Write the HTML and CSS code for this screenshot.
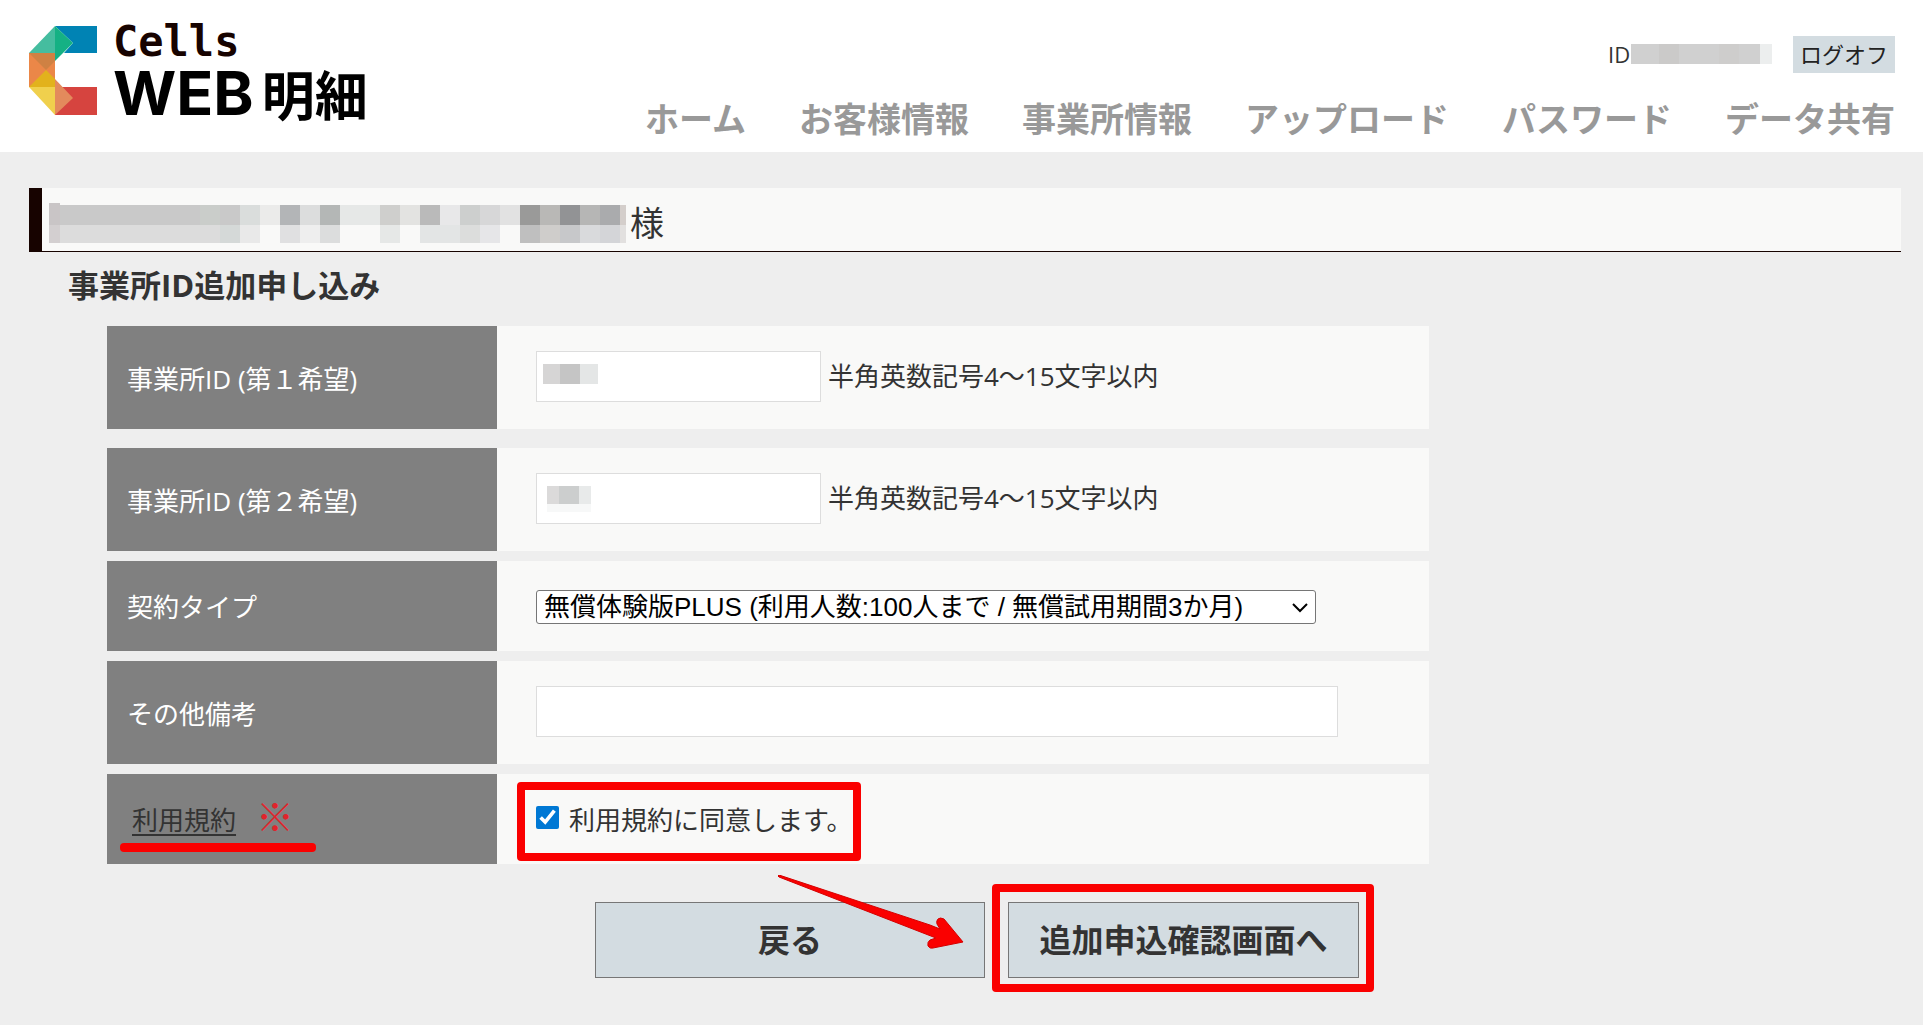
FILE: index.html
```html
<!DOCTYPE html>
<html lang="ja">
<head>
<meta charset="utf-8">
<title>Cells WEB明細</title>
<link rel="stylesheet" href="styles.css">
</head>
<body>
<header class="header">
  <a class="logo" href="#">
    <svg class="logo-mark" viewBox="0 0 68 90" width="68" height="90" aria-hidden="true">
      <path fill="#0083b4" d="M26 0H68V27H35L44 17z"/>
      <path fill="#45bd9f" d="M26 0L0 27H26z"/>
      <path fill="#15b184" d="M26 0L44 17L26 35z"/>
      <path fill="#eb8748" d="M0 27H26V61H0z"/>
      <path fill="#cf8143" d="M0 27H26V35L17 44z"/>
      <path fill="#d6443f" d="M26 61H68V89H26z"/>
      <path fill="#f0d04d" d="M0 61H26V89z"/>
      <path fill="#e2b21c" d="M0 61L17 44L26 53V61z"/>
      <path fill="#e38a5c" d="M26 53L44 72L26 89z"/>
    </svg>
    <span class="logo-text">
      <span class="logo-cells">Cells</span>
      <span class="logo-product"><span class="logo-web">WEB</span><span class="logo-meisai">明細</span></span>
    </span>
  </a>
  <div class="header-side">
    <div class="account">
      <span class="account-id">ID:<svg class="account-mask" width="141" height="20" aria-hidden="true"><path fill="#d0d0d0" d="M0 0h130v20H0z"/><path fill="#cbcac9" d="M28 0h20v20H28z"/><path fill="#cecdcc" d="M88 0h20v20H88z"/><path fill="#eceeee" d="M129 0h12v20h-12z"/></svg></span>
      <button class="logoff" type="button">ログオフ</button>
    </div>
    <nav class="nav">
      <a href="#">ホーム</a>
      <a href="#">お客様情報</a>
      <a href="#">事業所情報</a>
      <a href="#">アップロード</a>
      <a href="#">パスワード</a>
      <a href="#">データ共有</a>
    </nav>
  </div>
</header>
<main class="main">
  <h1 class="customer">
    <svg class="customer-mask" width="577" height="40" aria-hidden="true">
      <path fill="#c9c9c9" d="M0 2h191v26H0z"/>
      <path fill="#dcdcdc" d="M0 22h191v18H0z"/>
      <path fill="#c9c5c6" d="M0 0h11v22H0z"/>
      <path fill="#d3cfd0" d="M0 22h11v18H0z"/>
      <path fill="#cacdca" d="M151 2h20v20h-20z"/><path fill="#d5d9d8" d="M171 22h20v18h-20z"/>
      <path fill="#dadddc" d="M191 2h20v20h-20z"/><path fill="#e9e9e9" d="M191 22h20v18h-20z"/>
      <path fill="#ebebea" d="M211 2h20v20h-20z"/>
      <path fill="#b3b5b7" d="M231 2h20v20h-20z"/><path fill="#e0e0e1" d="M231 22h20v18h-20z"/>
      <path fill="#dcdddd" d="M251 2h20v20h-20z"/><path fill="#eeeeee" d="M251 22h20v18h-20z"/>
      <path fill="#b4b7b6" d="M271 2h20v20h-20z"/><path fill="#dcdddd" d="M271 22h20v18h-20z"/>
      <path fill="#e6e8e7" d="M291 2h40v20h-40z"/>
      <path fill="#cfcfcd" d="M331 2h20v20h-20z"/><path fill="#e6e8e7" d="M331 22h20v18h-20z"/>
      <path fill="#e3e3e1" d="M351 2h20v20h-20z"/>
      <path fill="#bababa" d="M371 2h20v20h-20z"/><path fill="#e3e5e5" d="M371 22h40v18h-40z"/>
      <path fill="#e8e8e9" d="M391 2h20v20h-20z"/>
      <path fill="#cdcfce" d="M411 2h20v20h-20z"/><path fill="#dcdddc" d="M411 22h20v18h-20z"/>
      <path fill="#d7d7d8" d="M431 2h20v20h-20z"/><path fill="#e6e6e8" d="M431 22h20v18h-20z"/>
      <path fill="#e2e2e2" d="M451 2h20v20h-20z"/>
      <path fill="#9a9a99" d="M471 2h20v20h-20z"/><path fill="#bfbfbf" d="M471 22h20v18h-20z"/>
      <path fill="#b9b8b6" d="M491 2h20v20h-20z"/><path fill="#cfcdcb" d="M491 22h20v18h-20z"/>
      <path fill="#929395" d="M511 2h20v20h-20z"/><path fill="#c7c8ca" d="M511 22h20v18h-20z"/>
      <path fill="#b6b6b5" d="M531 2h20v20h-20z"/><path fill="#d9dadc" d="M531 22h20v18h-20z"/>
      <path fill="#aaabad" d="M551 2h20v20h-20z"/><path fill="#d4d5d8" d="M551 22h20v18h-20z"/>
      <path fill="#d4cecb" d="M571 2h6v20h-6z"/><path fill="#e2e0df" d="M571 22h6v18h-6z"/>
    </svg>
    <span>様</span>
  </h1>
  <h2 class="title">事業所ID追加申し込み</h2>
  <form class="form">
    <div class="row row-spaced">
      <div class="head"><label for="id1">事業所ID (第１希望)</label></div>
      <div class="cell">
        <span class="masked">
          <input class="text text-short" id="id1" type="text">
          <svg class="value-mask" width="55" height="20" aria-hidden="true"><path fill="#d6d5d5" d="M0 0h17v20H0z"/><path fill="#c5c5c5" d="M17 0h20v20H17z"/><path fill="#e4e6e6" d="M37 0h18v20H37z"/></svg>
        </span>
        <span class="hint">半角英数記号4～15文字以内</span>
      </div>
    </div>
    <div class="row">
      <div class="head"><label for="id2">事業所ID (第２希望)</label></div>
      <div class="cell">
        <span class="masked">
          <input class="text text-short" id="id2" type="text">
          <svg class="value-mask" width="55" height="28" aria-hidden="true"><path fill="#dbdada" d="M4 0h12v18H4z"/><path fill="#cccece" d="M16 0h20v18H16z"/><path fill="#e8eaea" d="M36 0h12v18H36z"/><path fill="#f7f8f8" d="M4 18h44v8H4z"/></svg>
        </span>
        <span class="hint">半角英数記号4～15文字以内</span>
      </div>
    </div>
    <div class="row row-low">
      <div class="head"><label for="plan">契約タイプ</label></div>
      <div class="cell">
        <span class="select-box">
          <select class="select" id="plan"><option>無償体験版PLUS (利用人数:100人まで / 無償試用期間3か月)</option></select>
          <svg class="chevron" viewBox="0 0 16 10" width="16" height="10" aria-hidden="true"><path d="M1 1l7 7l7-7" fill="none" stroke="#000" stroke-width="2"/></svg>
        </span>
      </div>
    </div>
    <div class="row">
      <div class="head"><label for="note">その他備考</label></div>
      <div class="cell"><input class="text text-long" id="note" type="text"></div>
    </div>
    <div class="row row-low">
      <div class="head head-terms"><a class="terms" href="#">利用規約</a><span class="mark">※</span></div>
      <div class="cell">
        <label class="agree"><input class="check" type="checkbox" checked>利用規約に同意します。</label>
      </div>
    </div>
    <div class="actions">
      <button class="button button-back" type="button">戻る</button>
      <span class="button-frame"><button class="button button-next" type="submit">追加申込確認画面へ</button></span>
      <svg class="arrow" viewBox="0 0 188 76" width="188" height="76" aria-hidden="true">
        <path fill="#fa0000" stroke="#d40000" stroke-width="1" d="M1 0Q-1 1 1 2L158 63L152 65Q149 67 150 71Q152 74 155 73L185 67L166 44Q162 42 160 44Q158 46 159 49L162 54L152 50Z"/>
      </svg>
    </div>
  </form>
</main>
</body>
</html>
```
FILE: styles.css
```css
* { box-sizing: border-box; }

body {
  margin: 0;
  background: #eee;
  color: #333;
  font: 26px/40px "Open Sans", "Noto Sans CJK JP", sans-serif;
}

a { color: inherit; text-decoration: none; }

.header {
  display: flex;
  justify-content: space-between;
  min-height: 152px;
  padding: 20px 28px 9px 29px;
  background: #fff;
}

.logo {
  display: flex;
  gap: 16px;
  padding-top: 6px;
  color: #000;
}

.logo-mark { flex: none; }

.logo-text {
  display: flex;
  flex-direction: column;
  font-weight: 700;
}

.logo-cells {
  color: #170300;
  font-family: "DejaVu Sans Mono", monospace;
  font-size: 42px;
  line-height: 32px;
}

.logo-product {
  display: flex;
  align-items: center;
  gap: 8px;
}

.logo-web {
  font-family: Inter, sans-serif;
  font-size: 61px;
  line-height: 70px;
}

.logo-meisai {
  font-family: "Noto Sans CJK JP", sans-serif;
  font-size: 53px;
  line-height: 66px;
}

.header-side {
  display: flex;
  flex-direction: column;
  align-items: flex-end;
  justify-content: space-between;
  padding-top: 14px;
}

.account {
  display: flex;
  align-items: center;
  gap: 21px;
  font-size: 22px;
}

.account-id {
  position: relative;
  padding-right: 136px;
}

.account-mask {
  position: absolute;
  top: 10px;
  right: 0;
}

.logoff {
  padding: 0 7px;
  border: 0;
  background: #d3dce1;
  color: #222;
  font: inherit;
  line-height: 37px;
}

.nav {
  display: flex;
  gap: 53px;
  color: #999;
  font-size: 34px;
  font-weight: 700;
  line-height: 48px;
}

.main { padding: 36px 22px 32px 29px; }

.customer {
  display: flex;
  align-items: center;
  gap: 4px;
  min-height: 64px;
  margin: 0;
  padding: 6px 7px 0;
  border-bottom: 1px solid #170300;
  border-left: 13px solid #170300;
  background: #f9f9f8;
  font-size: 34px;
  font-weight: 400;
}

.title {
  margin: 0;
  padding: 13px 39px 21px;
  font-size: 31px;
  font-weight: 700;
}

.form {
  display: flex;
  flex-direction: column;
  gap: 10px;
  max-width: 1400px;
  padding-left: 78px;
}

.row {
  display: grid;
  grid-template-columns: 390px 1fr;
  min-height: 103px;
  background: #f9f9f8;
}

.row-low { min-height: 90px; }
.row-spaced { margin-bottom: 9px; }

.head {
  display: flex;
  align-items: center;
  padding: 2px 20px 0;
  background: #808080;
  color: #fff;
}

.cell {
  display: flex;
  align-items: center;
  gap: 7px;
  padding: 0 39px 2px;
}

.row-low .cell { padding: 2px 39px 0; }

.text {
  height: 51px;
  padding: 0 8px;
  border: 1px solid #ddd;
  background: #fff;
  font: inherit;
}

.text-short { display: block; width: 285px; }
.text-long { width: 802px; }

.hint { padding-bottom: 2px; }

.masked { position: relative; }

.value-mask {
  position: absolute;
  top: 13px;
  left: 7px;
}

.select-box {
  position: relative;
  width: 780px;
}

.select {
  display: block;
  width: 100%;
  height: 34px;
  padding: 0 7px;
  border: 1px solid #767676;
  border-radius: 3px;
  background: #fff;
  appearance: none;
  color: #000;
  font: 26px/32px "Liberation Sans", "Noto Sans CJK JP", sans-serif;
}

.chevron {
  position: absolute;
  top: 13px;
  right: 8px;
  pointer-events: none;
}

.head-terms {
  position: relative;
  gap: 20px;
  padding: 2px 25px 0;
  color: #333;
}

.head-terms::after {
  position: absolute;
  bottom: 12px;
  left: 13px;
  width: 196px;
  height: 9px;
  border-radius: 4px;
  background: #fa0000;
  content: "";
}

.terms {
  text-decoration: underline;
  text-underline-offset: 4px;
}

.mark {
  padding-bottom: 8px;
  color: #e0242c;
  font-size: 38px;
  font-weight: 700;
}

.agree {
  position: relative;
  display: flex;
  align-items: center;
  gap: 10px;
}

.agree::after {
  position: absolute;
  inset: -18px -9px -21px -19px;
  border: 8px solid #fa0000;
  border-radius: 4px;
  content: "";
}

.check {
  width: 23px;
  height: 23px;
  margin: 0 0 6px;
  accent-color: #0078d4;
}

.actions {
  position: relative;
  display: flex;
  gap: 23px;
  padding: 28px 0 0 488px;
}

.button {
  height: 76px;
  border: 1px solid #767676;
  background: #d3dce1;
  color: #333;
  font: 700 32px/48px "Open Sans", "Noto Sans CJK JP", sans-serif;
}

.button-back { width: 390px; }
.button-next { width: 351px; }

.button-frame { position: relative; }

.button-frame::after {
  position: absolute;
  inset: -18px -15px -14px -16px;
  border: 8px solid #fa0000;
  border-radius: 4px;
  content: "";
}

.arrow {
  position: absolute;
  top: 1px;
  left: 671px;
}
```
